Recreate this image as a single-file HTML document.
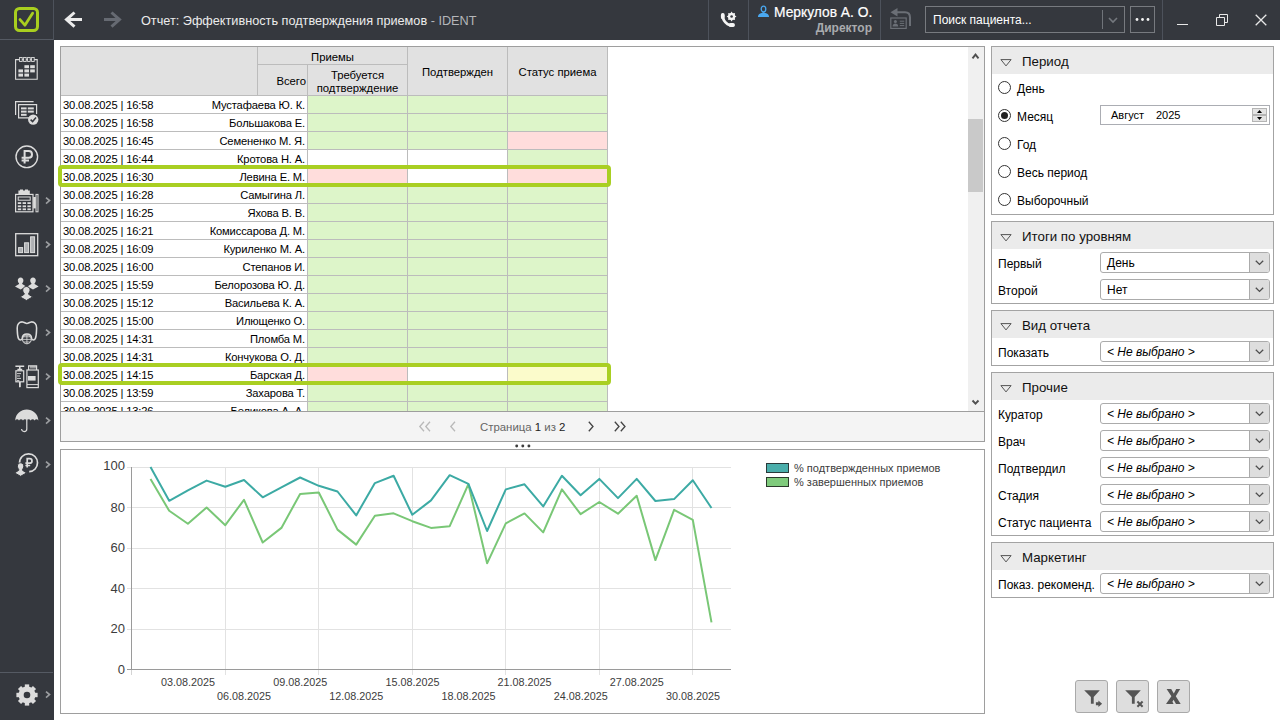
<!DOCTYPE html>
<html lang="ru">
<head>
<meta charset="utf-8">
<title>IDENT</title>
<style>
*{box-sizing:border-box;margin:0;padding:0}
html,body{width:1280px;height:720px;overflow:hidden;background:#fff;font-family:"Liberation Sans",sans-serif;font-size:12px;color:#000}
.abs{position:absolute}
#titlebar{position:absolute;left:0;top:0;width:1280px;height:40px;background:#35383e}
#sidebar{position:absolute;left:0;top:0;width:54px;height:720px;background:#35383e}
.vsep{position:absolute;top:0;width:1px;height:40px;background:#4d525b}
.hsep{position:absolute;left:0;width:53px;height:1px;background:#555a63}
.tb-text{position:absolute;white-space:nowrap}
svg{position:absolute;overflow:visible}
.chev{position:absolute;left:45px;width:6px;height:8px}
/* panels */
.panel{position:absolute;border:1px solid #9e9e9e;background:#fff}
/* table */
#grid{position:absolute;left:0;top:0;width:906px;height:364px;overflow:hidden}
.hd{position:absolute;background:#e1e1e1;font-size:11.3px;color:#000;text-align:center;white-space:nowrap}
.row{position:absolute;left:0;width:546px;height:18px;font-size:11.2px;letter-spacing:-0.15px;line-height:19px;white-space:nowrap}
.row .d{position:absolute;left:2px;top:0}
.row .n{position:absolute;right:302px;top:0;text-align:right}
.row i{position:absolute;top:0;height:17px;width:99px;display:block}
.row i.a{left:247px}.row i.b{left:347px}.row i.c{left:447px}
.g{background:#ddf5c9}.p{background:#ffdddc}.y{background:#fbfbcb}.w{background:#fff}
.hl{position:absolute;left:0;width:547px;height:1px;background:#bcbcbc}
.vl{position:absolute;top:0;width:1px;background:#bcbcbc}
.sel{position:absolute;left:58px;width:553px;height:22px;border:4px solid #a9cf22;border-radius:4px}
/* right panel */
.grp{position:absolute;left:991px;width:283px;border:1px solid #a3a3a3;background:#fff}
.grp .gh{position:absolute;left:0;top:0;width:281px;height:27px;background:#ebebeb;font-size:13.3px;line-height:29px;padding-left:30px;color:#111}
.grp .gh svg{left:8px;top:12px}
.lbl{position:absolute;left:6px;font-size:12px;white-space:nowrap;line-height:14px}
.combo{position:absolute;left:108px;width:170px;height:21px;border:1px solid #ababab;border-radius:3px;background:#fff;font-size:12px;line-height:20.6px;padding-left:6px;white-space:nowrap;overflow:hidden}
.combo.it{font-style:italic}
.combo b{position:absolute;right:0;top:0;width:20px;height:19px;background:#dedede;border-left:1px solid #ababab;display:block}
.combo b svg{left:5px;top:7px}
.radio{position:absolute;left:6px;width:13px;height:13px;border:1px solid #333;border-radius:50%;background:#fff}
.radio.on:after{content:"";position:absolute;left:2px;top:2px;width:7px;height:7px;border-radius:50%;background:#222}
.rlbl{position:absolute;left:25px;font-size:12px;white-space:nowrap;line-height:14px}
.btn{position:absolute;top:680px;width:33px;height:33px;background:#dedede;border:1px solid #a9a9a9;border-radius:3px}
</style>
</head>
<body>
<div id="titlebar"></div>
<div id="sidebar"></div>
<!-- ===== title bar ===== -->
<div class="vsep" style="left:53px"></div>
<div class="hsep" style="top:39px"></div>
<!-- logo -->
<svg style="left:14px;top:7px" width="25" height="25" viewBox="0 0 25 25"><rect x="1.5" y="1.5" width="22" height="22" rx="4" ry="4" fill="none" stroke="#a9cf1f" stroke-width="3"/><path d="M6 12.6 L10.9 18.2 L18.6 6.2" fill="none" stroke="#a9cf1f" stroke-width="2.8" stroke-linecap="round" stroke-linejoin="round"/></svg>
<!-- back / forward -->
<svg style="left:64px;top:10px" width="20" height="20" viewBox="0 0 20 20"><path d="M10.5 2.5 L2.5 9.6 L10.5 16.7 M3 9.6 H18" fill="none" stroke="#ececec" stroke-width="3" stroke-linejoin="miter"/></svg>
<svg style="left:102px;top:10px" width="20" height="20" viewBox="0 0 20 20"><path d="M9.5 2.5 L17.5 9.6 L9.5 16.7 M17 9.6 H2" fill="none" stroke="#666a72" stroke-width="3" stroke-linejoin="miter"/></svg>
<div class="tb-text" style="left:141px;top:13.5px;font-size:12.7px;line-height:15px;color:#ececec">Отчет: Эффективность подтверждения приемов <span style="color:#b4b6ba">- IDENT</span></div>
<div class="vsep" style="left:708px"></div>
<div class="vsep" style="left:748px"></div>
<div class="vsep" style="left:880px"></div>
<div class="vsep" style="left:1162px"></div>
<!-- phone+gear -->
<svg style="left:719px;top:11px" width="20" height="18" viewBox="0 0 20 18"><path d="M3.8 4 V6.6 C5 10.4 8 13.1 11 14.2 H14" fill="none" stroke="#f4f4f4" stroke-width="2.8" stroke-linecap="round" stroke-linejoin="round"/><path d="M3.8 3.9 V6.3 M11.6 14 H14" fill="none" stroke="#f4f4f4" stroke-width="3.8" stroke-linecap="round"/><polygon points="12.60,0.60 13.86,2.45 16.06,2.04 15.65,4.24 17.50,5.50 15.65,6.76 16.06,8.96 13.86,8.55 12.60,10.40 11.34,8.55 9.14,8.96 9.55,6.76 7.70,5.50 9.55,4.24 9.14,2.04 11.34,2.45" fill="#f4f4f4"/><circle cx="12.6" cy="5.5" r="3.5" fill="#f4f4f4"/><circle cx="12.6" cy="5.5" r="1.3" fill="#35383e"/></svg>
<!-- user icon -->
<svg style="left:757px;top:5px" width="13" height="13" viewBox="0 0 13 13"><ellipse cx="6.5" cy="4" rx="2.3" ry="2.9" fill="none" stroke="#4aa8f0" stroke-width="1.3"/><path d="M0.9 12 C0.9 9.2 2.6 8.6 4.6 7.9 L6.5 6.9 L8.4 7.9 C10.4 8.6 12.1 9.2 12.1 12 Z" fill="#4aa8f0"/></svg>
<div class="tb-text" style="left:774px;top:4px;font-size:13.8px;line-height:17px;color:#fff;-webkit-text-stroke:0.2px #fff">Меркулов А. О.</div>
<div class="tb-text" style="right:408px;top:21px;font-size:12px;line-height:15px;font-weight:bold;color:#a9abae">Директор</div>
<!-- card return icon -->
<svg style="left:889px;top:7px" width="24" height="23" viewBox="0 0 24 23"><path d="M8.5 1 L1.5 5.2 L8.5 9.4 Z" fill="#6b6f76"/><path d="M8 5.2 H16 C19.6 5.2 21 7.6 21 10.5 V19" fill="none" stroke="#6b6f76" stroke-width="2"/><rect x="1.8" y="11" width="15.4" height="10.4" fill="none" stroke="#6b6f76" stroke-width="1.2"/><circle cx="6.4" cy="14.6" r="1.5" fill="#6b6f76"/><path d="M3.6 19.4 C3.6 17.4 5 16.6 6.4 16.6 C7.8 16.6 9.2 17.4 9.2 19.4 Z" fill="#6b6f76"/><path d="M10.8 14.2 H15.2 M10.8 16.4 H15.2 M10.8 18.6 H15.2" stroke="#6b6f76" stroke-width="1"/></svg>
<!-- search -->
<div class="abs" style="left:925px;top:6px;width:200px;height:27px;border:1px solid #777a7f"></div>
<div class="tb-text" style="left:933px;top:12.8px;font-size:12px;line-height:15px;color:#fff">Поиск пациента...</div>
<div class="abs" style="left:1102px;top:10px;width:1px;height:19px;background:#70747a"></div>
<svg style="left:1108px;top:17px" width="10" height="6" viewBox="0 0 10 6"><path d="M1 1 L5 5 L9 1" fill="none" stroke="#74787e" stroke-width="1.6"/></svg>
<div class="abs" style="left:1130px;top:6px;width:25px;height:27px;border:1px solid #777a7f"></div>
<svg style="left:1135px;top:18px" width="15" height="3" viewBox="0 0 15 3"><circle cx="2" cy="1.5" r="1.4" fill="#f4f4f4"/><circle cx="7.5" cy="1.5" r="1.4" fill="#f4f4f4"/><circle cx="13" cy="1.5" r="1.4" fill="#f4f4f4"/></svg>
<!-- window controls -->
<div class="abs" style="left:1177px;top:24px;width:11px;height:1px;background:#e8e8e8"></div>
<svg style="left:1216px;top:14px" width="12" height="12" viewBox="0 0 12 12"><path d="M0.5 3.5 H8.5 V11.5 H0.5Z M3.5 3.5 V0.5 H11.5 V8.5 H8.5" fill="none" stroke="#e8e8e8" stroke-width="1"/></svg>
<svg style="left:1255px;top:14px" width="12" height="12" viewBox="0 0 12 12"><path d="M0.7 0.7 L11.3 11.3 M11.3 0.7 L0.7 11.3" fill="none" stroke="#e8e8e8" stroke-width="1.3"/></svg>
<!--TITLEBAR_END-->
<!-- ===== sidebar icons ===== -->
<!-- 1 calendar -->
<svg style="left:15px;top:57px" width="23" height="23" viewBox="0 0 23 23"><path d="M0.6 2.6 H22.2 V22.2 H0.6 Z" fill="none" stroke="#dcdcdc" stroke-width="1.1"/><g fill="#35383e" stroke="#dcdcdc" stroke-width="0.9"><rect x="4.6" y="0.5" width="2.6" height="4"/><rect x="8.6" y="0.5" width="2.6" height="4"/><rect x="12.6" y="0.5" width="2.6" height="4"/><rect x="16.6" y="0.5" width="2.6" height="4"/></g><g fill="#dcdcdc"><rect x="9.4" y="8.2" width="4.6" height="3"/><rect x="15.2" y="8.2" width="4.6" height="3"/><rect x="3.4" y="12.4" width="4.6" height="3"/><rect x="9.4" y="12.4" width="4.6" height="3"/><rect x="15.2" y="12.4" width="4.6" height="3"/><rect x="3.4" y="16.6" width="4.6" height="3"/><rect x="9.4" y="16.6" width="4.6" height="3"/></g></svg>
<!-- 2 docs with check -->
<svg style="left:15px;top:101px" width="24" height="24" viewBox="0 0 24 24"><path d="M0.6 14 V0.6 H18.6" fill="none" stroke="#dcdcdc" stroke-width="1.2"/><path d="M17 16.8 H3.6 V3.6 H21.6 V13" fill="none" stroke="#dcdcdc" stroke-width="1.2"/><g fill="#dcdcdc"><rect x="6" y="6.4" width="5.6" height="2"/><rect x="12.8" y="6.4" width="6" height="2"/><rect x="6" y="9.6" width="5.6" height="2"/><rect x="12.8" y="9.6" width="6" height="2"/><rect x="6" y="12.8" width="5.6" height="2"/></g><circle cx="18.2" cy="18.6" r="5.2" fill="#dcdcdc"/><path d="M15.6 18.6 L17.6 20.6 L21 16.6" fill="none" stroke="#35383e" stroke-width="1.5"/></svg>
<!-- 3 ruble circle -->
<svg style="left:15px;top:145px" width="24" height="24" viewBox="0 0 24 24"><circle cx="11.8" cy="11.8" r="10.8" fill="none" stroke="#dcdcdc" stroke-width="1.4"/><path d="M9.6 18.6 V6 H13.6 C16 6 17 7.7 17 9.4 C17 11.1 16 12.8 13.6 12.8 H6.6 M6.6 15.6 H14" fill="none" stroke="#dcdcdc" stroke-width="2"/></svg>
<!-- 4 cash register -->
<svg style="left:15px;top:189px" width="24" height="24" viewBox="0 0 24 24"><path d="M3.4 5 V1.6 H5 V0.6 H8 V1.6 H10 V0.6 H13 V1.6 H14.8 V5 Z" fill="#dcdcdc"/><rect x="0.6" y="5.4" width="17.4" height="17.4" fill="none" stroke="#dcdcdc" stroke-width="1.2"/><rect x="3.2" y="8" width="12" height="3.2" fill="none" stroke="#dcdcdc" stroke-width="1"/><g fill="#dcdcdc"><rect x="2.8" y="13.2" width="3.4" height="1.8"/><rect x="7.6" y="13.2" width="3.4" height="1.8"/><rect x="12.4" y="13.2" width="3.4" height="1.8"/><rect x="2.8" y="16.4" width="3.4" height="1.8"/><rect x="7.6" y="16.4" width="3.4" height="1.8"/><rect x="12.4" y="16.4" width="3.4" height="1.8"/><rect x="2.8" y="19.4" width="3.4" height="1.8"/><rect x="7.6" y="19.4" width="3.4" height="1.8"/><rect x="12.4" y="19.4" width="3.4" height="1.8"/><rect x="18.2" y="8" width="2.6" height="11.4"/></g><rect x="21" y="5.4" width="2" height="17.4" fill="none" stroke="#dcdcdc" stroke-width="1"/></svg>
<!-- 5 bar chart -->
<svg style="left:15px;top:233px" width="24" height="24" viewBox="0 0 24 24"><rect x="0.7" y="0.7" width="22" height="22" fill="none" stroke="#dcdcdc" stroke-width="1.3"/><g fill="#aeb0b3" stroke="#dcdcdc" stroke-width="1"><rect x="3.6" y="14.6" width="4" height="5"/><rect x="9.6" y="9.8" width="4" height="9.8"/><rect x="15.6" y="3.8" width="4" height="15.8"/></g></svg>
<!-- 6 people -->
<svg style="left:15px;top:277px" width="24" height="24" viewBox="0 0 24 24"><g fill="#dcdcdc"><path d="M5.6 0.4 C7.4 0.4 8.4 1.8 8.4 3.4 C8.4 4.6 7.9 5.6 7.2 6.2 V7 L11.2 9.4 L5.6 12.4 L0 9.4 L4 7 V6.2 C3.3 5.6 2.8 4.6 2.8 3.4 C2.8 1.8 3.8 0.4 5.6 0.4 Z"/><path transform="translate(12.4,0)" d="M5.6 0.4 C7.4 0.4 8.4 1.8 8.4 3.4 C8.4 4.6 7.9 5.6 7.2 6.2 V7 L11.2 9.4 L5.6 12.4 L0 9.4 L4 7 V6.2 C3.3 5.6 2.8 4.6 2.8 3.4 C2.8 1.8 3.8 0.4 5.6 0.4 Z"/><path d="M11.4 9.5 C13.7 9.5 15.1 11.2 15.1 13.1 C15.1 14.5 14.4 15.7 13.6 16.4 V17.3 L17.7 19.9 L11.4 23.5 L5.1 19.9 L9.2 17.3 V16.4 C8.4 15.7 7.7 14.5 7.7 13.1 C7.7 11.2 9.1 9.5 11.4 9.5 Z" stroke="#35383e" stroke-width="1"/></g></svg>
<!-- 7 tooth -->
<svg style="left:16px;top:321px" width="22" height="25" viewBox="0 0 22 25"><path d="M1.2 7 C1 3 3.4 0.8 6.4 0.9 C8.2 1 9.4 2.4 10.9 2.4 C12.4 2.4 13.6 1 15.4 0.9 C18.4 0.8 20.8 3 20.6 7 C20.4 11 20.6 14.5 19.4 17.4 C18.4 19.6 15.8 19.4 15.6 17.2 C15.4 14.6 13.6 13 10.9 13 C8.2 13 6.4 14.6 6.2 17.2 C6 19.4 3.4 19.6 2.4 17.4 C1.2 14.5 1.4 11 1.2 7 Z" fill="none" stroke="#dcdcdc" stroke-width="1.55"/><circle cx="10.9" cy="18.4" r="4.4" fill="none" stroke="#dcdcdc" stroke-width="1"/><path d="M10.9 14 V22.8 M6.5 18.4 H15.3 M7.4 15.8 H14.4 M7.4 21 H14.4" stroke="#dcdcdc" stroke-width="0.8" fill="none"/></svg>
<!-- 8 syringe + bottle -->
<svg style="left:15px;top:365px" width="24" height="24" viewBox="0 0 24 24"><path d="M0.4 1.2 H9.2 M4.8 1.2 V4.6 M2.4 4.6 H7.2" stroke="#dcdcdc" stroke-width="1.6" fill="none"/><rect x="0.9" y="5.8" width="7.8" height="11" fill="none" stroke="#dcdcdc" stroke-width="1.2"/><path d="M2 8.6 H6 M2 11 H5 M2 13.4 H6 M2 15.6 H4.4" stroke="#dcdcdc" stroke-width="0.9"/><path d="M4 17 H5.8 V21.6 L4.9 22.8 L4 21.6 Z" fill="#dcdcdc"/><path d="M13.6 5 V0.8 H21.6 V5 M16 0.8 V3.4 M18 0.8 V3.4 M20 0.8 V3.4" fill="none" stroke="#dcdcdc" stroke-width="1.2"/><rect x="11.9" y="5" width="11.4" height="17.6" fill="none" stroke="#dcdcdc" stroke-width="1.2"/><rect x="13" y="11" width="7.6" height="4.6" fill="#dcdcdc"/><path d="M12 19.6 H23.2" stroke="#dcdcdc" stroke-width="1"/></svg>
<!-- 9 umbrella -->
<svg style="left:15px;top:409px" width="24" height="24" viewBox="0 0 24 24"><path d="M0.2 11.6 C0.6 4.6 6 0.6 11.8 0.6 C17.6 0.6 23 4.6 23.4 11.6 C22.4 10 20.6 10 19.6 11.4 C18.6 10 16.6 10 15.6 11.4 C14.6 10 12.8 10 11.8 11.4 C10.8 10 9 10 8 11.4 C7 10 5 10 4 11.4 C3 10 1.2 10 0.2 11.6 Z" fill="#dcdcdc"/><path d="M11.8 11 V20 C11.8 23.4 6.6 23.4 6.6 20" fill="none" stroke="#dcdcdc" stroke-width="1.2"/></svg>
<!-- 10 ruble person -->
<svg style="left:15px;top:453px" width="24" height="24" viewBox="0 0 24 24"><path d="M4.6 10.2 C4.4 4.8 8.4 0.9 13.6 0.9 C18.7 0.9 22.5 4.9 22.5 9.8 C22.5 14.6 18.9 18.5 14.2 18.7" fill="none" stroke="#dcdcdc" stroke-width="1.7"/><path d="M12.2 14.6 V5.6 H14.6 C16.3 5.6 17 6.8 17 7.9 C17 9 16.3 10.2 14.6 10.2 H10.4 M10.4 12.5 H15.2" fill="none" stroke="#dcdcdc" stroke-width="1.7"/><path d="M5.6 9.8 C7.7 9.8 8.8 11.4 8.8 13.2 C8.8 14.6 8.2 15.7 7.5 16.4 V17.3 L11.6 19.9 L5.6 23.3 L-0.4 19.9 L3.7 17.3 V16.4 C3 15.7 2.4 14.6 2.4 13.2 C2.4 11.4 3.5 9.8 5.6 9.8 Z" fill="#dcdcdc" stroke="#35383e" stroke-width="1"/></svg>
<!-- chevrons -->
<svg class="chev" style="top:196.5px" viewBox="0 0 6 8"><path d="M1 0.6 L4.5 3.6 L1 6.6" fill="none" stroke="#9b9da0" stroke-width="1.7"/></svg>
<svg class="chev" style="top:240.5px" viewBox="0 0 6 8"><path d="M1 0.6 L4.5 3.6 L1 6.6" fill="none" stroke="#9b9da0" stroke-width="1.7"/></svg>
<svg class="chev" style="top:284.5px" viewBox="0 0 6 8"><path d="M1 0.6 L4.5 3.6 L1 6.6" fill="none" stroke="#9b9da0" stroke-width="1.7"/></svg>
<svg class="chev" style="top:328.5px" viewBox="0 0 6 8"><path d="M1 0.6 L4.5 3.6 L1 6.6" fill="none" stroke="#9b9da0" stroke-width="1.7"/></svg>
<svg class="chev" style="top:372.5px" viewBox="0 0 6 8"><path d="M1 0.6 L4.5 3.6 L1 6.6" fill="none" stroke="#9b9da0" stroke-width="1.7"/></svg>
<svg class="chev" style="top:416.5px" viewBox="0 0 6 8"><path d="M1 0.6 L4.5 3.6 L1 6.6" fill="none" stroke="#9b9da0" stroke-width="1.7"/></svg>
<svg class="chev" style="top:460.5px" viewBox="0 0 6 8"><path d="M1 0.6 L4.5 3.6 L1 6.6" fill="none" stroke="#9b9da0" stroke-width="1.7"/></svg>
<svg class="chev" style="top:690.6px;left:44.6px" viewBox="0 0 6 8"><path d="M1 0.6 L4.5 3.6 L1 6.6" fill="none" stroke="#9b9da0" stroke-width="1.7"/></svg>
<!-- gear -->
<div class="hsep" style="top:672px"></div>
<svg style="left:15.5px;top:683.6px" width="22" height="22" viewBox="-11 -11 22 22"><g fill="#dcdcdc"><circle r="8.5"/><g transform="rotate(0)"><rect x="-2.2" y="-10.6" width="4.4" height="4"/><rect x="-2.2" y="6.6" width="4.4" height="4"/></g><g transform="rotate(45)"><rect x="-2.2" y="-10.6" width="4.4" height="4"/><rect x="-2.2" y="6.6" width="4.4" height="4"/></g><g transform="rotate(90)"><rect x="-2.2" y="-10.6" width="4.4" height="4"/><rect x="-2.2" y="6.6" width="4.4" height="4"/></g><g transform="rotate(135)"><rect x="-2.2" y="-10.6" width="4.4" height="4"/><rect x="-2.2" y="6.6" width="4.4" height="4"/></g></g><circle r="3.3" fill="#35383e"/></svg>
<!--SIDEBAR_END-->
<!--TP_START--><!-- ===== table panel ===== -->
<div class="panel" style="left:60px;top:46px;width:925px;height:396px">
<div id="grid">
<div class="hd" style="left:0;top:0;width:546px;height:48px"></div>
<div class="hd" style="left:197px;top:0;width:149px;height:17px;line-height:21px;background:none">Приемы</div>
<div class="hd" style="left:197px;top:18px;width:48px;height:30px;line-height:33px;background:none;text-align:right">Всего</div>
<div class="hd" style="left:247px;top:22px;width:99px;height:28px;line-height:13px;background:none;white-space:normal">Требуется подтверждение</div>
<div class="hd" style="left:347px;top:0;width:99px;height:48px;line-height:50px;background:none">Подтвержден</div>
<div class="hd" style="left:447px;top:0;width:99px;height:48px;line-height:50px;background:none">Статус приема</div>
<div class="row" style="top:49px"><span class="d">30.08.2025 | 16:58</span><span class="n">Мустафаева Ю. К.</span><i class="a g"></i><i class="b g"></i><i class="c g"></i></div>
<div class="row" style="top:67px"><span class="d">30.08.2025 | 16:58</span><span class="n">Большакова Е.</span><i class="a g"></i><i class="b g"></i><i class="c g"></i></div>
<div class="row" style="top:85px"><span class="d">30.08.2025 | 16:45</span><span class="n">Семененко М. Я.</span><i class="a g"></i><i class="b g"></i><i class="c p"></i></div>
<div class="row" style="top:103px"><span class="d">30.08.2025 | 16:44</span><span class="n">Кротова Н. А.</span><i class="a w"></i><i class="b w"></i><i class="c g"></i></div>
<div class="row" style="top:121px"><span class="d">30.08.2025 | 16:30</span><span class="n">Левина Е. М.</span><i class="a p"></i><i class="b w"></i><i class="c p"></i></div>
<div class="row" style="top:139px"><span class="d">30.08.2025 | 16:28</span><span class="n">Самыгина Л.</span><i class="a g"></i><i class="b g"></i><i class="c g"></i></div>
<div class="row" style="top:157px"><span class="d">30.08.2025 | 16:25</span><span class="n">Яхова В. В.</span><i class="a g"></i><i class="b g"></i><i class="c g"></i></div>
<div class="row" style="top:175px"><span class="d">30.08.2025 | 16:21</span><span class="n">Комиссарова Д. М.</span><i class="a g"></i><i class="b g"></i><i class="c g"></i></div>
<div class="row" style="top:193px"><span class="d">30.08.2025 | 16:09</span><span class="n">Куриленко М. А.</span><i class="a g"></i><i class="b g"></i><i class="c g"></i></div>
<div class="row" style="top:211px"><span class="d">30.08.2025 | 16:00</span><span class="n">Степанов И.</span><i class="a g"></i><i class="b g"></i><i class="c g"></i></div>
<div class="row" style="top:229px"><span class="d">30.08.2025 | 15:59</span><span class="n">Белорозова Ю. Д.</span><i class="a g"></i><i class="b g"></i><i class="c g"></i></div>
<div class="row" style="top:247px"><span class="d">30.08.2025 | 15:12</span><span class="n">Васильева К. А.</span><i class="a g"></i><i class="b g"></i><i class="c g"></i></div>
<div class="row" style="top:265px"><span class="d">30.08.2025 | 15:00</span><span class="n">Илющенко О.</span><i class="a g"></i><i class="b g"></i><i class="c g"></i></div>
<div class="row" style="top:283px"><span class="d">30.08.2025 | 14:31</span><span class="n">Пломба М.</span><i class="a g"></i><i class="b g"></i><i class="c g"></i></div>
<div class="row" style="top:301px"><span class="d">30.08.2025 | 14:31</span><span class="n">Кончукова О. Д.</span><i class="a g"></i><i class="b g"></i><i class="c g"></i></div>
<div class="row" style="top:319px"><span class="d">30.08.2025 | 14:15</span><span class="n">Барская Д.</span><i class="a p"></i><i class="b w"></i><i class="c y"></i></div>
<div class="row" style="top:337px"><span class="d">30.08.2025 | 13:59</span><span class="n">Захарова Т.</span><i class="a g"></i><i class="b g"></i><i class="c g"></i></div>
<div class="row" style="top:355px"><span class="d">30.08.2025 | 13:26</span><span class="n">Беликова А. А.</span><i class="a g"></i><i class="b g"></i><i class="c g"></i></div>
<div class="hl" style="top:48px"></div>
<div class="hl" style="top:66px"></div>
<div class="hl" style="top:84px"></div>
<div class="hl" style="top:102px"></div>
<div class="hl" style="top:120px"></div>
<div class="hl" style="top:138px"></div>
<div class="hl" style="top:156px"></div>
<div class="hl" style="top:174px"></div>
<div class="hl" style="top:192px"></div>
<div class="hl" style="top:210px"></div>
<div class="hl" style="top:228px"></div>
<div class="hl" style="top:246px"></div>
<div class="hl" style="top:264px"></div>
<div class="hl" style="top:282px"></div>
<div class="hl" style="top:300px"></div>
<div class="hl" style="top:318px"></div>
<div class="hl" style="top:336px"></div>
<div class="hl" style="top:354px"></div>
<div class="hl" style="top:372px"></div>
<div class="hl" style="top:17px;left:197px;width:150px"></div>
<div class="vl" style="left:196px;height:48px"></div>
<div class="vl" style="left:246px;top:17px;height:360px"></div>
<div class="vl" style="left:346px;height:380px"></div>
<div class="vl" style="left:446px;height:380px"></div>
<div class="vl" style="left:546px;height:380px"></div>
</div>
<div class="abs" style="left:907px;top:0;width:16px;height:364px;background:#f0f0f0"></div>
<div class="abs" style="left:907px;top:72px;width:15px;height:73px;background:#c9c9c9"></div>
<svg style="left:911px;top:5.6px" width="7" height="6" viewBox="0 0 7 6"><path d="M0.5 5.4 L3.5 1.6 L6.5 5.4" fill="none" stroke="#505050" stroke-width="1.9"/></svg>
<svg style="left:911px;top:353px" width="7" height="5" viewBox="0 0 7 5"><path d="M0.5 0.5 L3.5 3.7 L6.5 0.5" fill="none" stroke="#505050" stroke-width="1.9"/></svg>
<div class="abs" style="left:0;top:364px;width:923px;height:1px;background:#9e9e9e"></div>
<div class="abs" style="left:0;top:365px;width:923px;height:29px;background:#f4f4f4"></div>
<div class="abs" style="left:419px;top:372px;font-size:11.4px;line-height:16px;color:#666;white-space:nowrap">Страница <span style="color:#222">1</span> из <span style="color:#222">2</span></div>
<svg style="left:358.2px;top:374.3px" width="14" height="11" viewBox="0 0 14 11"><path d="M5 0.8 L0.8 5.5 L5 10.2 M11 0.8 L6.8 5.5 L11 10.2" fill="none" stroke="#b9b9b9" stroke-width="1.3"/></svg>
<svg style="left:389.2px;top:374.3px" width="8" height="11" viewBox="0 0 8 11"><path d="M5 0.8 L0.8 5.5 L5 10.2" fill="none" stroke="#b9b9b9" stroke-width="1.3"/></svg>
<svg style="left:527.1px;top:374.3px" width="8" height="11" viewBox="0 0 8 11"><path d="M0.8 0.8 L5 5.5 L0.8 10.2" fill="none" stroke="#444" stroke-width="1.3"/></svg>
<svg style="left:553.1px;top:374.3px" width="14" height="11" viewBox="0 0 14 11"><path d="M0.8 0.8 L5 5.5 L0.8 10.2 M6.8 0.8 L11 5.5 L6.8 10.2" fill="none" stroke="#444" stroke-width="1.3"/></svg>
</div>
<div class="sel" style="top:165px"></div>
<div class="sel" style="top:363px"></div>
<svg style="left:515px;top:443.6px" width="16" height="4" viewBox="0 0 16 4"><circle cx="1.7" cy="2" r="1.45" fill="#3c3c3c"/><circle cx="7.8" cy="2" r="1.45" fill="#3c3c3c"/><circle cx="13.9" cy="2" r="1.45" fill="#3c3c3c"/></svg>
<!--TP_END-->
<!--CHARTPANEL_START--><!-- ===== chart panel ===== -->
<div class="panel" style="left:60px;top:449px;width:925px;height:265px"></div>
<svg style="left:0;top:0" width="1280" height="720" viewBox="0 0 1280 720">
<path d="M127 467.5 H731" stroke="#e2e2e2" stroke-width="1"/>
<path d="M127 507.5 H731" stroke="#e2e2e2" stroke-width="1"/>
<path d="M127 548.5 H731" stroke="#e2e2e2" stroke-width="1"/>
<path d="M127 588.5 H731" stroke="#e2e2e2" stroke-width="1"/>
<path d="M127 629.5 H731" stroke="#e2e2e2" stroke-width="1"/>
<path d="M225.5 467 V675" stroke="#e2e2e2" stroke-width="1"/>
<path d="M318.5 467 V675" stroke="#e2e2e2" stroke-width="1"/>
<path d="M412.5 467 V675" stroke="#e2e2e2" stroke-width="1"/>
<path d="M505.5 467 V675" stroke="#e2e2e2" stroke-width="1"/>
<path d="M599.5 467 V675" stroke="#e2e2e2" stroke-width="1"/>
<path d="M692.5 467 V675" stroke="#e2e2e2" stroke-width="1"/>
<path d="M131.5 467 V670 M127 669.5 H731" stroke="#9a9a9a" stroke-width="1" fill="none"/><path d="M131.5 670 V675" stroke="#d4d4d4" stroke-width="1"/>
<polyline points="150.5,479.0 169.2,510.8 187.9,523.8 206.6,507.5 225.3,525.2 244.0,499.8 262.7,542.5 281.4,527.9 300.1,494.0 318.8,492.5 337.5,529.6 356.2,544.6 374.9,515.8 393.6,513.3 412.3,521.2 431.0,527.9 449.7,526.2 468.4,484.2 487.1,563.3 505.8,523.3 524.5,513.4 543.2,532.4 561.9,489.3 580.6,514.2 599.3,502.0 618.0,513.7 636.7,495.8 655.4,560.1 674.1,509.8 692.8,519.9 711.5,622.4" fill="none" stroke="#79c776" stroke-width="2" stroke-linejoin="round"/>
<polyline points="150.5,466.9 169.2,500.8 187.9,490.4 206.6,480.6 225.3,486.7 244.0,480.0 262.7,497.3 281.4,487.3 300.1,477.5 318.8,485.8 337.5,491.5 356.2,515.4 374.9,483.1 393.6,475.8 412.3,514.8 431.0,500.4 449.7,475.2 468.4,483.8 487.1,531.0 505.8,489.4 524.5,484.3 543.2,506.4 561.9,475.8 580.6,495.2 599.3,478.9 618.0,498.1 636.7,478.9 655.4,501.0 674.1,499.1 692.8,480.2 711.5,508.0" fill="none" stroke="#3caaa4" stroke-width="2" stroke-linejoin="round"/>
<text x="125" y="470.40000000000003" font-size="13" text-anchor="end" fill="#3c3c3c">100</text>
<text x="125" y="511.5" font-size="13" text-anchor="end" fill="#3c3c3c">80</text>
<text x="125" y="552.0" font-size="13" text-anchor="end" fill="#3c3c3c">60</text>
<text x="125" y="592.6" font-size="13" text-anchor="end" fill="#3c3c3c">40</text>
<text x="125" y="633.2" font-size="13" text-anchor="end" fill="#3c3c3c">20</text>
<text x="125" y="673.6" font-size="13" text-anchor="end" fill="#3c3c3c">0</text>
<text x="188.0" y="686" font-size="10.8" text-anchor="middle" fill="#3c3c3c">03.08.2025</text>
<text x="244.1" y="700" font-size="10.8" text-anchor="middle" fill="#3c3c3c">06.08.2025</text>
<text x="300.2" y="686" font-size="10.8" text-anchor="middle" fill="#3c3c3c">09.08.2025</text>
<text x="356.3" y="700" font-size="10.8" text-anchor="middle" fill="#3c3c3c">12.08.2025</text>
<text x="412.4" y="686" font-size="10.8" text-anchor="middle" fill="#3c3c3c">15.08.2025</text>
<text x="468.5" y="700" font-size="10.8" text-anchor="middle" fill="#3c3c3c">18.08.2025</text>
<text x="524.6" y="686" font-size="10.8" text-anchor="middle" fill="#3c3c3c">21.08.2025</text>
<text x="580.7" y="700" font-size="10.8" text-anchor="middle" fill="#3c3c3c">24.08.2025</text>
<text x="636.8" y="686" font-size="10.8" text-anchor="middle" fill="#3c3c3c">27.08.2025</text>
<text x="692.9" y="700" font-size="10.8" text-anchor="middle" fill="#3c3c3c">30.08.2025</text>
<rect x="766.5" y="463.5" width="22" height="9" fill="#4aaeab" stroke="#2a3a3a" stroke-width="1"/>
<rect x="766.5" y="477.5" width="22" height="9" fill="#7fcb7c" stroke="#2a3a2a" stroke-width="1"/>
<text x="794" y="472" font-size="11" fill="#3c3c3c">% подтвержденных приемов</text>
<text x="794" y="486" font-size="11" fill="#3c3c3c">% завершенных приемов</text>
</svg>
<!--CHARTPANEL_END-->
<!--RIGHTPANEL_START--><!-- ===== right panel ===== -->
<div class="grp" style="top:46px;height:169px"><div class="gh"><svg width="12" height="8" viewBox="0 0 12 8"><path d="M0.9 0.6 H11.1 L6 6.9 Z" fill="none" stroke="#555" stroke-width="1"/></svg>Период</div><div class="radio" style="top:34px"></div><div class="rlbl" style="top:34.5px">День</div><div class="radio on" style="top:62px"></div><div class="rlbl" style="top:62.5px">Месяц</div><div class="radio" style="top:90px"></div><div class="rlbl" style="top:90.5px">Год</div><div class="radio" style="top:118px"></div><div class="rlbl" style="top:118.5px">Весь период</div><div class="radio" style="top:146px"></div><div class="rlbl" style="top:146.5px">Выборочный</div><div class="abs" style="left:108px;top:58px;width:170px;height:20px;border:1px solid #abadb3;background:#fff"></div><div class="abs" style="left:119px;top:61px;font-size:11px;line-height:14px;white-space:nowrap">Август</div><div class="abs" style="left:164px;top:61px;font-size:11px;line-height:14px;white-space:nowrap">2025</div><div class="abs" style="left:260px;top:61px;width:15px;height:7px;background:#e4e4e4;border:1px solid #b4b4b4"></div><div class="abs" style="left:260px;top:68px;width:15px;height:7px;background:#e4e4e4;border:1px solid #b4b4b4"></div><svg style="left:265px;top:63px" width="5" height="3" viewBox="0 0 5 3"><path d="M0 3 L2.5 0 L5 3Z" fill="#000"/></svg><svg style="left:265px;top:70px" width="5" height="3" viewBox="0 0 5 3"><path d="M0 0 L2.5 3 L5 0Z" fill="#000"/></svg></div>
<div class="grp" style="top:221px;height:83px"><div class="gh"><svg width="12" height="8" viewBox="0 0 12 8"><path d="M0.9 0.6 H11.1 L6 6.9 Z" fill="none" stroke="#555" stroke-width="1"/></svg>Итоги по уровням</div><div class="lbl" style="top:34.5px">Первый</div><div class="combo" style="top:30px">День<b><svg width="9" height="6" viewBox="0 0 9 6"><path d="M0.8 0.8 L4.5 4.4 L8.2 0.8" fill="none" stroke="#4e4e4e" stroke-width="1.35"/></svg></b></div><div class="lbl" style="top:61.5px">Второй</div><div class="combo" style="top:57px">Нет<b><svg width="9" height="6" viewBox="0 0 9 6"><path d="M0.8 0.8 L4.5 4.4 L8.2 0.8" fill="none" stroke="#4e4e4e" stroke-width="1.35"/></svg></b></div></div>
<div class="grp" style="top:310px;height:56px"><div class="gh"><svg width="12" height="8" viewBox="0 0 12 8"><path d="M0.9 0.6 H11.1 L6 6.9 Z" fill="none" stroke="#555" stroke-width="1"/></svg>Вид отчета</div><div class="lbl" style="top:34.5px">Показать</div><div class="combo it" style="top:30px">&lt; Не выбрано &gt;<b><svg width="9" height="6" viewBox="0 0 9 6"><path d="M0.8 0.8 L4.5 4.4 L8.2 0.8" fill="none" stroke="#4e4e4e" stroke-width="1.35"/></svg></b></div></div>
<div class="grp" style="top:372px;height:164px"><div class="gh"><svg width="12" height="8" viewBox="0 0 12 8"><path d="M0.9 0.6 H11.1 L6 6.9 Z" fill="none" stroke="#555" stroke-width="1"/></svg>Прочие</div><div class="lbl" style="top:34.5px">Куратор</div><div class="combo it" style="top:30px">&lt; Не выбрано &gt;<b><svg width="9" height="6" viewBox="0 0 9 6"><path d="M0.8 0.8 L4.5 4.4 L8.2 0.8" fill="none" stroke="#4e4e4e" stroke-width="1.35"/></svg></b></div><div class="lbl" style="top:61.5px">Врач</div><div class="combo it" style="top:57px">&lt; Не выбрано &gt;<b><svg width="9" height="6" viewBox="0 0 9 6"><path d="M0.8 0.8 L4.5 4.4 L8.2 0.8" fill="none" stroke="#4e4e4e" stroke-width="1.35"/></svg></b></div><div class="lbl" style="top:88.5px">Подтвердил</div><div class="combo it" style="top:84px">&lt; Не выбрано &gt;<b><svg width="9" height="6" viewBox="0 0 9 6"><path d="M0.8 0.8 L4.5 4.4 L8.2 0.8" fill="none" stroke="#4e4e4e" stroke-width="1.35"/></svg></b></div><div class="lbl" style="top:115.5px">Стадия</div><div class="combo it" style="top:111px">&lt; Не выбрано &gt;<b><svg width="9" height="6" viewBox="0 0 9 6"><path d="M0.8 0.8 L4.5 4.4 L8.2 0.8" fill="none" stroke="#4e4e4e" stroke-width="1.35"/></svg></b></div><div class="lbl" style="top:142.5px">Статус пациента</div><div class="combo it" style="top:138px">&lt; Не выбрано &gt;<b><svg width="9" height="6" viewBox="0 0 9 6"><path d="M0.8 0.8 L4.5 4.4 L8.2 0.8" fill="none" stroke="#4e4e4e" stroke-width="1.35"/></svg></b></div></div>
<div class="grp" style="top:542px;height:56px"><div class="gh"><svg width="12" height="8" viewBox="0 0 12 8"><path d="M0.9 0.6 H11.1 L6 6.9 Z" fill="none" stroke="#555" stroke-width="1"/></svg>Маркетинг</div><div class="lbl" style="top:34.5px">Показ. рекоменд.</div><div class="combo it" style="top:30px">&lt; Не выбрано &gt;<b><svg width="9" height="6" viewBox="0 0 9 6"><path d="M0.8 0.8 L4.5 4.4 L8.2 0.8" fill="none" stroke="#4e4e4e" stroke-width="1.35"/></svg></b></div></div>
<div class="btn" style="left:1075px"><svg width="33" height="33" viewBox="0 0 33 33" style="left:-1px;top:-1px"><path d="M9.2 10.2 H24.8 L18.7 17 V23.7 H15.9 V17 Z" fill="#555"/><path d="M20.9 22.3 H23.4 V20.6 L27.1 23.75 L23.4 26.9 V25.2 H20.9 Z" fill="#555"/></svg></div>
<div class="btn" style="left:1116px"><svg width="33" height="33" viewBox="0 0 33 33" style="left:-1px;top:-1px"><path d="M9.2 10.2 H24.8 L18.7 17 V23.7 H15.9 V17 Z" fill="#555"/><path d="M21.4 21.5 L26.6 26.7 M26.6 21.5 L21.4 26.7" stroke="#555" stroke-width="2" fill="none"/></svg></div>
<div class="btn" style="left:1157px"><svg width="33" height="33" viewBox="0 0 33 33" style="left:-1px;top:-1px"><path d="M9.6 9 H14.2 L16.8 13.4 L19.2 9 H23.2 L18.8 16.3 L23.7 23.9 H19 L16.6 19.8 L15.4 21.8 L16.6 23.9 H9 L14.4 16.3 Z" fill="#555"/></svg></div>
<!--RIGHTPANEL_END-->
</body>
</html>
